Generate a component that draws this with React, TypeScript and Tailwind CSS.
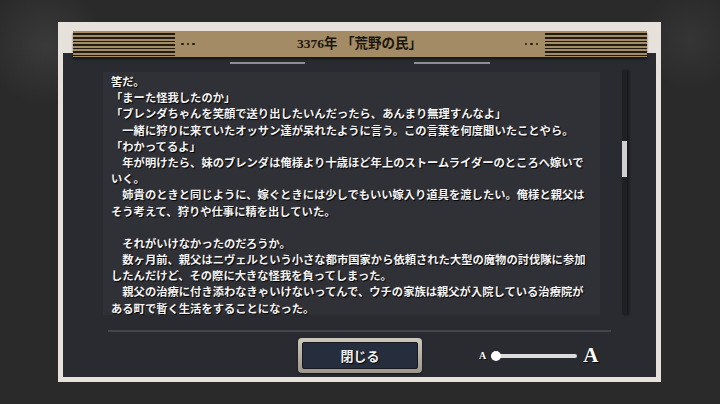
import React from "react";

const lines = [
    "筈だ。",
    "「まーた怪我したのか」",
    "「ブレンダちゃんを笑顔で送り出したいんだったら、あんまり無理すんなよ」",
    "　一緒に狩りに来ていたオッサン達が呆れたように言う。この言葉を何度聞いたことやら。",
    "「わかってるよ」",
    "　年が明けたら、妹のブレンダは俺様より十歳ほど年上のストームライダーのところへ嫁いで",
    "いく。",
    "　姉貴のときと同じように、嫁ぐときには少しでもいい嫁入り道具を渡したい。俺様と親父は",
    "そう考えて、狩りや仕事に精を出していた。",
    "",
    "　それがいけなかったのだろうか。",
    "　数ヶ月前、親父はニヴェルという小さな都市国家から依頼された大型の魔物の討伐隊に参加",
    "したんだけど、その際に大きな怪我を負ってしまった。",
    "　親父の治療に付き添わなきゃいけないってんで、ウチの家族は親父が入院している治療院が",
    "ある町で暫く生活をすることになった。",
];

function Stripes() {
    return (
        <div className="h-full w-[102px] bg-[repeating-linear-gradient(to_bottom,transparent_0px,transparent_1.5px,#211b14_1.5px,#211b14_3px,transparent_3px,transparent_3.6px)]" />
    );
}

function Dots() {
    return (
        <div className="flex gap-[3px]">
            <span className="h-[2.5px] w-[2.5px] rounded-full bg-[#1d1812]" />
            <span className="h-[2.5px] w-[2.5px] rounded-full bg-[#1d1812]" />
            <span className="h-[2.5px] w-[2.5px] rounded-full bg-[#1d1812]" />
        </div>
    );
}

export default function App() {
    return (
        <div className="h-[404px] w-[720px] overflow-hidden bg-[#2a2a2a] bg-[radial-gradient(circle_at_45px_45px,#3a3a3a_0px,transparent_60px),radial-gradient(circle_at_690px_40px,#353535_0px,transparent_50px)] pl-[58px] pt-[22px] font-['Noto_Sans_CJK_JP',sans-serif]">
            {/* Outer frame */}
            <div className="flex h-[360px] w-[603px] flex-col bg-[#e6e1db] px-[5px] pb-[5px] pt-[9px]">
                {/* Header band */}
                <div className="relative z-10 ml-[10px] mr-[9px] flex h-[26px] items-center bg-[#a38b65] py-[1px] shadow-[0_2px_2px_rgba(0,0,0,0.5)]">
                    <Stripes />
                    <div className="ml-[6px]">
                        <Dots />
                    </div>
                    <div className="flex-1 text-center font-['Liberation_Serif','Noto_Sans_CJK_JP',serif] text-[13.5px] font-semibold text-[#1c1711]">
                        3376年 「荒野の民」
                    </div>
                    <div className="mr-[7px]">
                        <Dots />
                    </div>
                    <Stripes />
                </div>

                {/* Dark panel */}
                <div className="-mt-[4px] flex flex-1 flex-col bg-[#2a2b31]">
                    {/* top small rules */}
                    <div className="mt-[9px] flex h-[2px]">
                        <div className="ml-[167px] w-[75px] bg-[#8d8e92]" />
                        <div className="ml-[109px] w-[76px] bg-[#8d8e92]" />
                    </div>

                    {/* Text + scrollbar */}
                    <div className="mt-[8px] flex">
                        <div className="ml-[40px] h-[243px] w-[497px] overflow-hidden bg-[#303137] pl-[8px] pt-[1px] text-[11.3px] font-bold leading-[16.2px] text-[#f4f4f4] [text-shadow:1px_1px_1px_#000]">
                            {lines.map((l, i) => (
                                <div key={i} className="h-[16.2px] whitespace-nowrap">
                                    {l}
                                </div>
                            ))}
                        </div>
                        <div className="relative ml-[22px] -mt-[2px] h-[245px] w-[5px] bg-[#1f2024] shadow-[2px_0_3px_rgba(0,0,0,0.5)]">
                            <div className="absolute left-0 top-[71px] h-[36px] w-[5px] bg-[#cfcfcf]" />
                        </div>
                    </div>

                    {/* divider */}
                    <div className="ml-[45px] mt-[15px] h-[2px] w-[503px] bg-[#45464d]" />

                    {/* bottom row */}
                    <div className="mt-[6px] flex items-center">
                        <button className="ml-[235px] flex h-[35px] w-[124px] items-center justify-center rounded-[4px] bg-[linear-gradient(to_bottom,#cfc9bd,#9d978b)] p-[4px] shadow-[0_1px_2px_rgba(0,0,0,0.6)]">
                            <span className="flex h-full w-full items-center justify-center rounded-[2px] border border-[#15181f] bg-[#262d3c] text-[13px] font-bold text-[#f2f2f2] [text-shadow:1px_1px_1px_#000]">
                                閉じる
                            </span>
                        </button>
                        <div className="ml-[57px] flex items-center">
                            <span className="font-['Liberation_Serif',serif] text-[10px] font-bold text-white [text-shadow:1px_1px_0_#000]">
                                A
                            </span>
                            <div className="relative ml-[5px] flex h-[10px] w-[86px] items-center">
                                <div className="h-[4px] w-full rounded-full bg-[#dcdcdc]" />
                                <div className="absolute left-0 top-0 h-[10px] w-[10px] rounded-full bg-white" />
                            </div>
                            <span className="ml-[6px] font-['Liberation_Serif',serif] text-[21px] font-bold leading-none text-white [text-shadow:1px_1px_1px_#000]">
                                A
                            </span>
                        </div>
                    </div>
                </div>
            </div>
        </div>
    );
}
